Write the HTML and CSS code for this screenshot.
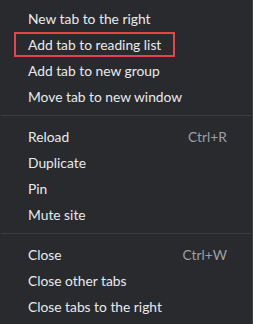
FILE: index.html
```html
<!DOCTYPE html>
<html>
<head>
<meta charset="utf-8">
<link rel="stylesheet" href="styles.css">
</head>
<body>
<div class="menu">
  <div class="group">
    <div class="item"><span class="label">New tab to the right</span></div>
    <div class="item highlighted"><span class="label">Add tab to reading list</span></div>
    <div class="item"><span class="label">Add tab to new group</span></div>
    <div class="item"><span class="label">Move tab to new window</span></div>
  </div>
  <div class="sep"></div>
  <div class="group">
    <div class="item"><span class="label">Reload</span><span class="shortcut">Ctrl+R</span></div>
    <div class="item"><span class="label">Duplicate</span></div>
    <div class="item"><span class="label">Pin</span></div>
    <div class="item"><span class="label">Mute site</span></div>
  </div>
  <div class="sep"></div>
  <div class="group">
    <div class="item"><span class="label">Close</span><span class="shortcut">Ctrl+W</span></div>
    <div class="item"><span class="label">Close other tabs</span></div>
    <div class="item"><span class="label">Close tabs to the right</span></div>
  </div>
</div>
</body>
</html>
```
FILE: styles.css
```css
html, body {
  margin: 0;
  padding: 0;
  background: #292a2d;
}
.menu {
  width: 253px;
  height: 324px;
  box-sizing: border-box;
  background: #292a2d;
  border-right: 1px solid #3f4043;
  padding: 5px 0;
  font-family: "Lato", "Noto Sans", sans-serif;
  font-size: 13.8px;
  color: #e8eaed;
}
.group {
  display: flex;
  flex-direction: column;
}
.item {
  height: 26px;
  display: flex;
  align-items: center;
  justify-content: space-between;
  padding: 0 25px 0 28px;
  position: relative;
}
.highlighted::after {
  content: "";
  position: absolute;
  left: 14px;
  top: 1px;
  width: 161px;
  height: 25px;
  box-sizing: border-box;
  border: 2px solid #e0474c;
}
.shortcut {
  color: #9aa0a6;
}
.sep {
  height: 1px;
  background: #3c3d40;
  margin: 6px 1px 7px;
}
```
